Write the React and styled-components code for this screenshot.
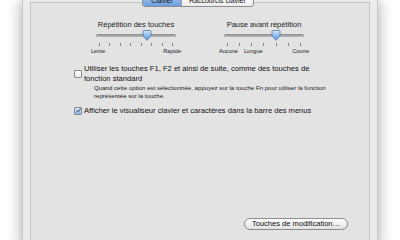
import React from "react";
import styled, { createGlobalStyle } from "styled-components";

const GlobalStyle = createGlobalStyle`
  html, body {
    margin: 0;
    padding: 0;
    background: #ffffff;
    overflow: hidden;
  }
  body {
    font-family: "Liberation Sans", Arial, sans-serif;
    color: #1a1a1a;
  }
`;

const sliders = [
  {
    title: "Répétition des touches",
    value: 0.64,
    ticks: 8,
    labels: ["Lente", "Rapide"],
  },
  {
    title: "Pause avant répétition",
    value: 0.65,
    ticks: 7,
    labels: ["Aucune", "Longue", "Courte"],
  },
];

function Main() {
  return (
    <Page>
      <GlobalStyle />
      <Window>
        <Tabs>
          <Tab $active>Clavier</Tab>
          <Tab>Raccourcis clavier</Tab>
        </Tabs>
        <Panel>
          <SliderRow>
            {sliders.map((s) => (
              <SliderGroup key={s.title}>
                <SliderTitle>{s.title}</SliderTitle>
                <Track>
                  <Thumb style={{ left: `${s.value * 100}%` }}>
                    <svg width="10" height="11" viewBox="0 0 10 11">
                      <defs>
                        <linearGradient id="tg" x1="0" y1="0" x2="0" y2="1">
                          <stop offset="0" stopColor="#d8e9fb" />
                          <stop offset="0.5" stopColor="#8dbcf0" />
                          <stop offset="1" stopColor="#5b96e0" />
                        </linearGradient>
                      </defs>
                      <path
                        d="M1 1.5 Q1 0.5 2 0.5 L8 0.5 Q9 0.5 9 1.5 L9 6 L5 10.3 L1 6 Z"
                        fill="url(#tg)"
                        stroke="#5577a3"
                        strokeWidth="0.8"
                      />
                    </svg>
                  </Thumb>
                </Track>
                <Ticks>
                  {Array.from({ length: s.ticks }).map((_, i) => (
                    <Tick key={i} />
                  ))}
                </Ticks>
                <Labels>
                  {s.labels.map((l, i) => (
                    <TickLabel key={l} $pushRight={s.labels.length === 3 && i === 1}>
                      {l}
                    </TickLabel>
                  ))}
                </Labels>
              </SliderGroup>
            ))}
          </SliderRow>

          <Options>
            <Option>
              <CheckRow>
                <Checkbox />
                <OptionText>
                  Utiliser les touches F1, F2 et ainsi de suite, comme des touches de
                  fonction standard
                </OptionText>
              </CheckRow>
              <Note>
                Quand cette option est sélectionnée, appuyez sur la touche Fn pour
                utiliser la fonction représentée sur la touche.
              </Note>
            </Option>
            <Option>
              <CheckRow>
                <Checkbox $checked>
                  <svg width="9" height="9" viewBox="0 0 9 9">
                    <path
                      d="M1.5 4.5 L3.6 7 L8.5 0.8"
                      fill="none"
                      stroke="#1d2a4a"
                      strokeWidth="1.5"
                    />
                  </svg>
                </Checkbox>
                <OptionText>
                  Afficher le visualiseur clavier et caractères dans la barre des menus
                </OptionText>
              </CheckRow>
            </Option>
          </Options>

          <Footer>
            <PillButton>Touches de modification…</PillButton>
          </Footer>
        </Panel>
      </Window>
    </Page>
  );
}

const Page = styled.div`
  width: 400px;
  height: 240px;
  overflow: hidden;
  background: #fff;
`;

const Window = styled.div`
  box-sizing: border-box;
  width: 356px;
  height: 250px;
  margin-left: 22px;
  padding: 0 7px;
  background: #ebebeb;
  border-left: 1px solid #c9c9c9;
  border-right: 1px solid #c9c9c9;
  box-shadow: 0 0 14px rgba(0, 0, 0, 0.35);
  display: flex;
  flex-direction: column;
`;

const Tabs = styled.div`
  position: relative;
  z-index: 1;
  display: flex;
  align-self: center;
  margin-top: -6px;
  margin-right: 4px;
  height: 11px;
  border: 1px solid #8e8e8e;
  border-radius: 3px;
  overflow: hidden;
  background: linear-gradient(#ffffff, #ececec);
`;

const Tab = styled.div`
  display: flex;
  align-items: center;
  padding: 0 ${(p) => (p.$active ? "8px" : "7px")};
  font-size: 7px;
  line-height: 11px;
  color: #111;
  border-left: ${(p) => (p.$active ? "none" : "1px solid #9a9a9a")};
  background: ${(p) =>
    p.$active ? "linear-gradient(#a9c9ef, #6a9fe0)" : "transparent"};
`;

const Panel = styled.div`
  flex: 1;
  margin-top: -5px;
  border: 1px solid #c4c4c4;
  background: #e3e3e3;
  display: flex;
  flex-direction: column;
`;

const SliderRow = styled.div`
  display: flex;
  justify-content: center;
  gap: 48px;
  padding: 17px 0 0 0;
`;

const SliderGroup = styled.div`
  display: flex;
  flex-direction: column;
  align-items: center;
  width: 80px;
`;

const SliderTitle = styled.div`
  font-size: 7.5px;
  line-height: 9px;
  white-space: nowrap;
  color: #1c1c1c;
`;

const Track = styled.div`
  position: relative;
  width: 80px;
  height: 3px;
  margin-top: 5px;
  border-radius: 2px;
  background: linear-gradient(#8d8d8d, #b9b9b9);
`;

const Thumb = styled.div`
  position: absolute;
  top: -4px;
  width: 10px;
  height: 11px;
  margin-left: -5px;
  line-height: 0;
`;

const Ticks = styled.div`
  display: flex;
  justify-content: space-between;
  width: 74px;
  margin-top: 6px;
`;

const Tick = styled.div`
  width: 1px;
  height: 3px;
  background: #8a8a8a;
`;

const Labels = styled.div`
  display: flex;
  justify-content: space-between;
  width: 90px;
  height: 8px;
  margin-top: 1px;
`;

const TickLabel = styled.span`
  margin-left: ${(p) => (p.$pushRight ? "6px" : "0")};
  margin-right: ${(p) => (p.$pushRight ? "auto" : "0")};
  font-size: 5.6px;
  line-height: 8px;
  color: #222;
  white-space: nowrap;
`;

const Options = styled.div`
  display: flex;
  flex-direction: column;
  gap: 6px;
  padding: 9px 0 0 43px;
`;

const Option = styled.div`
  display: flex;
  flex-direction: column;
`;

const CheckRow = styled.div`
  display: flex;
  align-items: center;
  gap: 2px;
`;

const Checkbox = styled.div`
  flex: none;
  box-sizing: border-box;
  width: 8px;
  height: 8px;
  border: 1px solid #8a8a8a;
  border-radius: 1px;
  background: ${(p) =>
    p.$checked ? "linear-gradient(#d6e6fa, #8ab4e8)" : "linear-gradient(#ffffff, #e9e9e9)"};
  display: flex;
  align-items: center;
  justify-content: center;
  overflow: visible;
  svg {
    margin: -2px 0 0 1px;
  }
`;

const OptionText = styled.div`
  width: 242px;
  font-size: 7.6px;
  line-height: 10px;
  color: #111;
`;

const Note = styled.div`
  width: 236px;
  padding-left: 20px;
  margin-top: 0;
  font-size: 6.1px;
  line-height: 8px;
  color: #222;
`;

const Footer = styled.div`
  display: flex;
  justify-content: flex-end;
  margin-top: auto;
  padding: 0 21px 19px 0;
`;

const PillButton = styled.div`
  box-sizing: border-box;
  height: 12px;
  width: 104px;
  border: 1px solid #8c8c8c;
  border-radius: 6px;
  background: linear-gradient(#ffffff, #f0f0f0 50%, #e2e2e2);
  font-size: 7.5px;
  line-height: 10px;
  text-align: center;
  color: #111;
`;

export default Main;
